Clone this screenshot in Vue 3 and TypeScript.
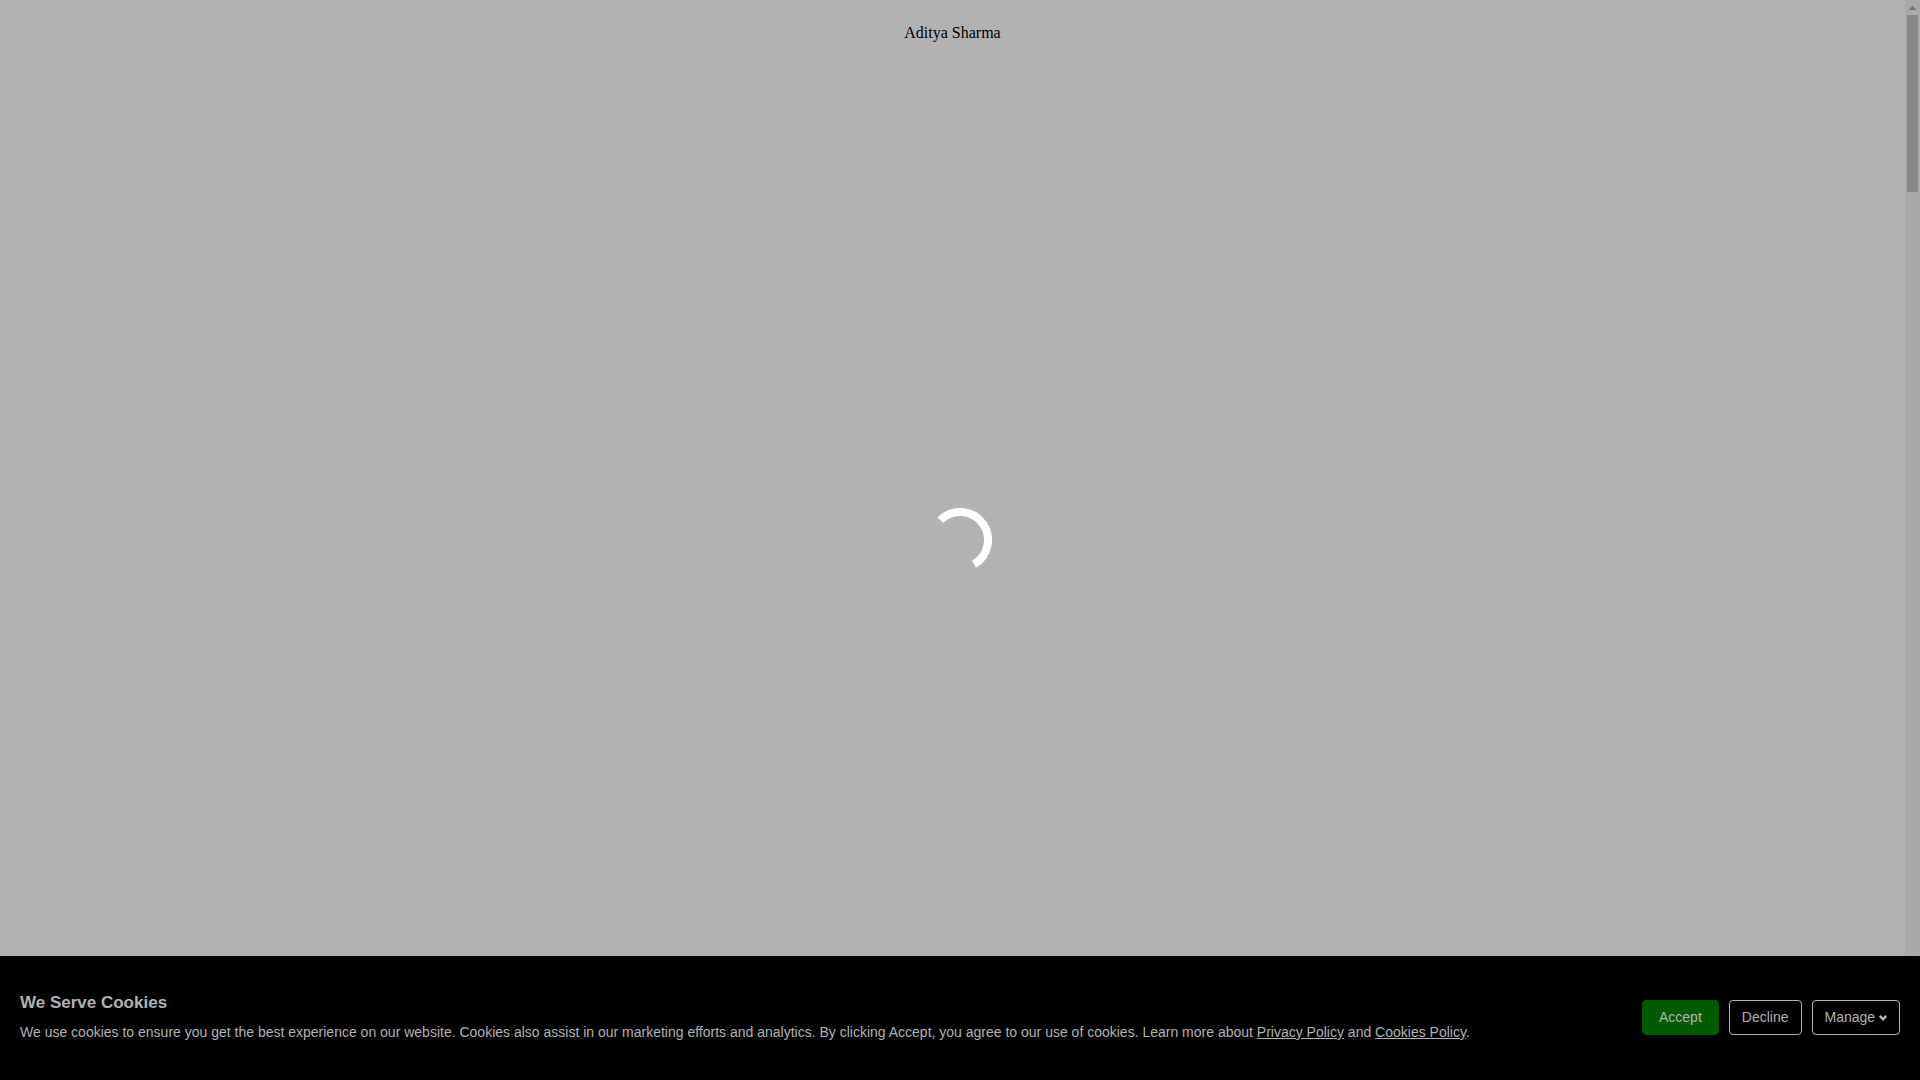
<script setup lang="ts">
import { ref } from 'vue'

const name = ref('Aditya Sharma')
</script>

<template>
  <div class="screen">
    <div class="viewport">
      <main class="page">
        <p class="name">{{ name }}</p>
      </main>
      <div class="scrollbar" aria-hidden="true">
        <svg class="arrow" width="15" height="15" viewBox="0 0 15 15" shape-rendering="crispEdges">
          <path d="M7 6h1v1h1v1h1v1h1v1H4V9h1V8h1V7h1z" fill="#757575" />
        </svg>
        <div class="thumb"></div>
      </div>
    </div>

    <svg class="spinner" width="64" height="64" viewBox="-32 -32 64 64" role="img" aria-label="Loading">
      <path d="M-19.8 -19.8A28 28 0 1 1 14 24.25" fill="none" stroke="#fff" stroke-width="8" />
    </svg>

    <footer class="cookies">
      <div class="message">
        <h2>We Serve Cookies</h2>
        <p>
          We use cookies to ensure you get the best experience on our website. Cookies also assist in our marketing
          efforts and analytics. By clicking Accept, you agree to our use of cookies. Learn more about
          <a href="#privacy">Privacy Policy</a> and <a href="#cookies">Cookies Policy</a>.
        </p>
      </div>
      <div class="actions">
        <button type="button" class="accept">Accept</button>
        <button type="button">Decline</button>
        <button type="button">
          Manage
          <svg width="8" height="7" viewBox="0 0 8 7" aria-hidden="true">
            <path d="M0 1.7L1.7 0L4 2.4L6.3 0L8 1.7V2L4 6L0 2z" fill="currentColor" />
          </svg>
        </button>
      </div>
    </footer>
  </div>
</template>

<style>
body {
  margin: 0;
  background: #b2b2b2;
}
</style>

<style scoped>
.screen {
  position: relative;
  display: flex;
  flex-direction: column;
  min-height: 100vh;
  background: #b2b2b2;
}

.viewport {
  flex: 1;
  display: flex;
}

.page {
  flex: 1;
  padding: 24px 0;
  text-align: center;
  font: 16px/18px "Liberation Serif", "Times New Roman", serif;
  color: #000;
}

.name {
  margin: 0;
}

.scrollbar {
  width: 15px;
  background: #a9a9a9;
}

.arrow {
  display: block;
}

.thumb {
  height: 177px;
  margin: 0 2px;
  background: #878787;
}

.spinner {
  position: absolute;
  top: 50%;
  left: 50%;
  margin: -32px 0 0 -32px;
}

.cookies {
  display: flex;
  align-items: flex-start;
  justify-content: space-between;
  gap: 20px;
  box-sizing: border-box;
  min-height: 124px;
  padding: 37px 20px;
  background: #000;
  color: #b2b2b2;
  font: 14px/20px "Liberation Sans", Arial, sans-serif;
}

.message h2 {
  margin: 0 0 9px;
  font-size: 17px;
  line-height: 20px;
}

.message p {
  margin: 0;
}

.message a {
  color: inherit;
}

.actions {
  display: flex;
  gap: 10px;
  margin-top: 7px;
}

button {
  height: 35px;
  padding: 0 12px 1px;
  border: 1px solid #b2b2b2;
  border-radius: 4px;
  background: transparent;
  color: #b2b2b2;
  font: inherit;
  white-space: nowrap;
  cursor: pointer;
}

.accept {
  padding: 0 16px 1px;
  border-color: #005a00;
  background: #005a00;
}
</style>
